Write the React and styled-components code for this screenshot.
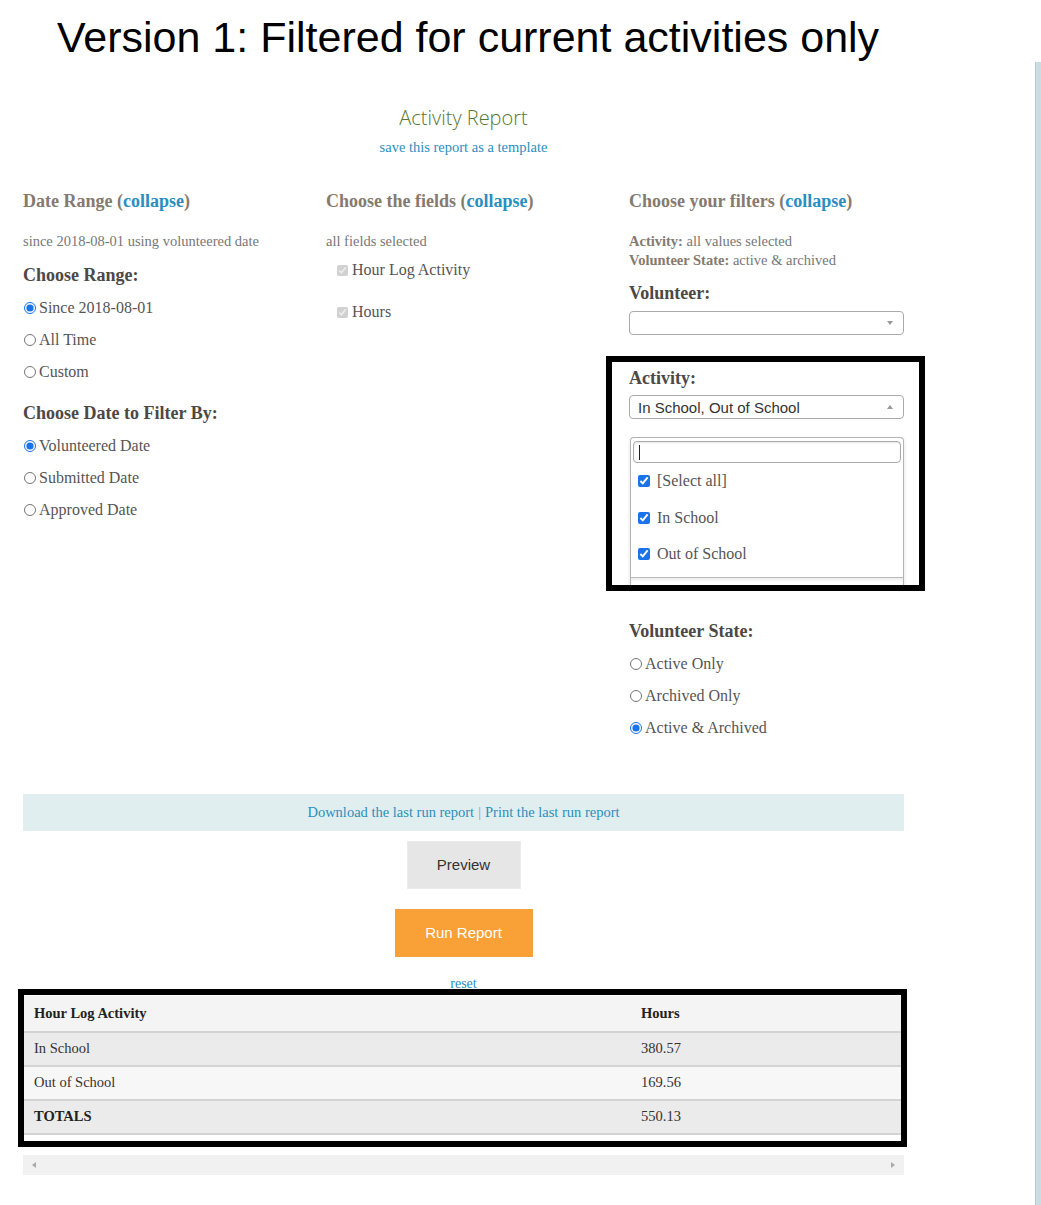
import styled, { createGlobalStyle } from "styled-components";

const GlobalStyle = createGlobalStyle`
  body {
    margin: 0;
    background: #fff;
    font-family: "Liberation Serif", "Times New Roman", serif;
    color: #555;
  }
`;

const Page = styled.div`
  min-height: 100vh;
  display: flex;
  flex-direction: column;
`;

const Title = styled.h1`
  margin: 0;
  height: 62px;
  box-sizing: border-box;
  padding: 16px 0 0 57px;
  font-family: "Liberation Sans", Arial, sans-serif;
  font-weight: 400;
  font-size: 43px;
  line-height: 42px;
  letter-spacing: 0;
  color: #000;
`;

const Body = styled.div`
  flex: 1;
  display: flex;
  align-items: stretch;
`;

const Main = styled.div`
  width: 1035px;
  box-sizing: border-box;
  padding: 44px 0 30px 23px;
`;

const SideBar = styled.div`
  width: 6px;
  background: linear-gradient(to right, #b7ced5 0 1px, #c9dde3 1px);
`;

const Content = styled.div`
  width: 881px;
`;

const ReportHead = styled.div`
  text-align: center;
`;

const ReportTitle = styled.div`
  font-family: "Open Sans", sans-serif;
  font-weight: 300;
  font-size: 20px;
  line-height: 24px;
  color: #587630;
`;

const TemplateLink = styled.a`
  display: block;
  margin-top: 9px;
  font-size: 14.5px;
  line-height: 16px;
  color: #2a8fbd;
  text-decoration: none;
`;

const Columns = styled.div`
  margin-top: 35px;
  display: grid;
  grid-template-columns: 303px 303px 275px;
`;

const Column = styled.div`
  display: flex;
  flex-direction: column;
`;

const SectionHeading = styled.div`
  font-weight: 700;
  font-size: 18px;
  line-height: 22px;
  color: #857a6e;

  a {
    color: #2a8fc0;
    text-decoration: none;
  }
`;

const Summary = styled.div`
  margin-top: 20px;
  font-size: 14.5px;
  line-height: ${(p) => (p.$tight ? "19px" : "18px")};
  color: #777;

  b {
    color: #857a6e;
  }
`;

const Label = styled.div`
  margin-top: ${(p) => p.$mt ?? 14}px;
  font-weight: 700;
  font-size: 18px;
  line-height: 22px;
  color: #4d4844;
`;

const OptionList = styled.div`
  margin-top: 6px;
  display: flex;
  flex-direction: column;
`;

const OptionRow = styled.label`
  height: 32px;
  display: flex;
  align-items: center;
  font-size: 16px;
  color: #555;
`;

const Radio = styled.input.attrs({ type: "radio" })`
  width: 12px;
  height: 12px;
  margin: 0 3px 0 1px;
  accent-color: #1a73e8;
`;

const FieldList = styled.div`
  margin-top: 4px;
  display: flex;
  flex-direction: column;
  gap: 10px;
  padding-left: 11px;
`;

const FieldCheck = styled.input.attrs({ type: "checkbox" })`
  width: 11px;
  height: 11px;
  margin: 0 4px 0 0;
`;

const SelectBox = styled.div`
  margin-top: ${(p) => p.$mt}px;
  height: 24px;
  box-sizing: border-box;
  border: 1px solid #aaa;
  border-radius: 4px;
  background: #fff;
  display: flex;
  align-items: center;
  justify-content: space-between;
  padding: 0 10px 0 8px;
  font-family: "Liberation Sans", Arial, sans-serif;
  font-size: 15px;
  color: #333;
`;

const Arrow = styled.span`
  width: 0;
  height: 0;
  border-left: 3.5px solid transparent;
  border-right: 3.5px solid transparent;
  ${(p) =>
    p.$up
      ? "border-bottom: 4px solid #999;"
      : "border-top: 4px solid #999;"}
`;

const Highlight = styled.div`
  margin: 21px -21px 0 -23px;
  padding: 5px 15px 0 17px;
  border: 6px solid #000;
`;

const DropPanel = styled.div`
  margin: 18px 0 0 1px;
  border: 1px solid #b4b4b4;
  border-bottom: none;
  border-radius: 4px 4px 0 0;
  box-shadow: 0 2px 4px rgba(0, 0, 0, 0.12);
  background: #fff;
`;

const SearchInput = styled.div`
  margin: 3px 2px 0;
  height: 22px;
  box-sizing: border-box;
  border: 1px solid #aaa;
  border-radius: 4px;
  box-shadow: inset 0 1px 2px rgba(0, 0, 0, 0.1);
  display: flex;
  align-items: center;
  padding-left: 5px;
`;

const Caret = styled.span`
  width: 1px;
  height: 15px;
  background: #222;
`;

const DropItem = styled.label`
  height: 36.5px;
  display: flex;
  align-items: center;
  padding-left: 7px;
  font-size: 16px;
  color: #555;
`;

const DropCheck = styled.input.attrs({ type: "checkbox" })`
  width: 12px;
  height: 12px;
  margin: 0 7px 0 0;
  accent-color: #1a73e8;
`;

const DropFooter = styled.div`
  margin-top: 4px;
  height: 7px;
  border-top: 1px solid #bbb;
  box-shadow: inset 0 2px 3px rgba(0, 0, 0, 0.08);
`;

const LinkBar = styled.div`
  margin-top: 50px;
  height: 37px;
  background: #e0eef0;
  display: flex;
  align-items: center;
  justify-content: center;
  font-size: 14.5px;
  color: #999;

  a {
    color: #2a8fbd;
    text-decoration: none;
  }
`;

const Sep = styled.span`
  margin: 0 4px;
`;

const Actions = styled.div`
  display: flex;
  flex-direction: column;
  align-items: center;
`;

const ActionButton = styled.button`
  margin-top: ${(p) => (p.$primary ? 20 : 10)}px;
  width: ${(p) => (p.$primary ? 138 : 114)}px;
  height: 48px;
  border: 1px solid ${(p) => (p.$primary ? "#f5a040" : "#ececec")};
  background: ${(p) => (p.$primary ? "#f9a036" : "#e6e6e6")};
  color: ${(p) => (p.$primary ? "#fff" : "#333")};
  font-family: "Liberation Sans", Arial, sans-serif;
  font-size: 15px;
  padding: 0;
`;

const ResetLink = styled.a`
  margin-top: 20px;
  font-size: 14px;
  line-height: 13px;
  height: 13px;
  color: #2a8fbd;
  text-decoration: none;
`;

const TableFrame = styled.div`
  margin: -1px 0 0 -5px;
  width: 889px;
  box-sizing: border-box;
  border: 6px solid #000;
  padding: 1px 0 6px;
  background: #fff;
`;

const TableRow = styled.div`
  display: grid;
  grid-template-columns: 607px 1fr;
  align-items: center;
  height: ${(p) => (p.$head ? 37 : 34)}px;
  box-sizing: border-box;
  border-bottom: 2px solid #d3d3d3;
  background: ${(p) => p.$bg};
  font-size: 14.5px;
  color: #333;
`;

const Cell = styled.div`
  padding-left: 10px;
  font-weight: ${(p) => (p.$bold ? 700 : "inherit")};
  color: ${(p) => (p.$bold ? "#222" : "inherit")};
`;

const ScrollTrack = styled.div`
  margin-top: 8px;
  height: 20px;
  background: #f1f1f1;
  display: flex;
  align-items: center;
  justify-content: space-between;
  padding: 0 9px;
`;

const ScrollArrow = styled.span`
  width: 0;
  height: 0;
  border-top: 3.5px solid transparent;
  border-bottom: 3.5px solid transparent;
  ${(p) =>
    p.$right
      ? "border-left: 4px solid #aaa;"
      : "border-right: 4px solid #aaa;"}
`;

const rows = [
  { name: "In School", hours: "380.57", bg: "#ebebeb" },
  { name: "Out of School", hours: "169.56", bg: "#f7f7f7" },
];

const Radios = ({ name, options, checked }) => (
  <OptionList>
    {options.map((o) => (
      <OptionRow key={o}>
        <Radio name={name} defaultChecked={o === checked} />
        {o}
      </OptionRow>
    ))}
  </OptionList>
);

export default function App() {
  return (
    <Page>
      <GlobalStyle />
      <Title>Version 1: Filtered for current activities only</Title>
      <Body>
        <Main>
          <Content>
            <ReportHead>
              <ReportTitle>Activity Report</ReportTitle>
              <TemplateLink href="#">save this report as a template</TemplateLink>
            </ReportHead>

            <Columns>
              <Column>
                <SectionHeading>
                  Date Range (<a href="#">collapse</a>)
                </SectionHeading>
                <Summary>since 2018-08-01 using volunteered date</Summary>
                <Label>Choose Range:</Label>
                <Radios
                  name="range"
                  options={["Since 2018-08-01", "All Time", "Custom"]}
                  checked="Since 2018-08-01"
                />
                <Label>Choose Date to Filter By:</Label>
                <Radios
                  name="datetype"
                  options={["Volunteered Date", "Submitted Date", "Approved Date"]}
                  checked="Volunteered Date"
                />
              </Column>

              <Column>
                <SectionHeading>
                  Choose the fields (<a href="#">collapse</a>)
                </SectionHeading>
                <Summary>all fields selected</Summary>
                <FieldList>
                  <OptionRow>
                    <FieldCheck disabled defaultChecked />
                    Hour Log Activity
                  </OptionRow>
                  <OptionRow>
                    <FieldCheck disabled defaultChecked />
                    Hours
                  </OptionRow>
                </FieldList>
              </Column>

              <Column>
                <SectionHeading>
                  Choose your filters (<a href="#">collapse</a>)
                </SectionHeading>
                <Summary $tight>
                  <b>Activity:</b> all values selected
                  <br />
                  <b>Volunteer State:</b> active &amp; archived
                </Summary>
                <Label $mt={12}>Volunteer:</Label>
                <SelectBox $mt={7}>
                  <span />
                  <Arrow />
                </SelectBox>

                <Highlight>
                  <Label $mt={0}>Activity:</Label>
                  <SelectBox $mt={6}>
                    <span>In School, Out of School</span>
                    <Arrow $up />
                  </SelectBox>
                  <DropPanel>
                    <SearchInput>
                      <Caret />
                    </SearchInput>
                    {["[Select all]", "In School", "Out of School"].map((t) => (
                      <DropItem key={t}>
                        <DropCheck defaultChecked />
                        {t}
                      </DropItem>
                    ))}
                    <DropFooter />
                  </DropPanel>
                </Highlight>

                <Label $mt={29}>Volunteer State:</Label>
                <Radios
                  name="state"
                  options={["Active Only", "Archived Only", "Active & Archived"]}
                  checked="Active & Archived"
                />
              </Column>
            </Columns>

            <LinkBar>
              <a href="#">Download the last run report</a>
              <Sep>|</Sep>
              <a href="#">Print the last run report</a>
            </LinkBar>

            <Actions>
              <ActionButton>Preview</ActionButton>
              <ActionButton $primary>Run Report</ActionButton>
              <ResetLink href="#">reset</ResetLink>
            </Actions>

            <TableFrame>
              <TableRow $head $bg="#f4f4f4">
                <Cell $bold>Hour Log Activity</Cell>
                <Cell $bold>Hours</Cell>
              </TableRow>
              {rows.map((r) => (
                <TableRow key={r.name} $bg={r.bg}>
                  <Cell>{r.name}</Cell>
                  <Cell>{r.hours}</Cell>
                </TableRow>
              ))}
              <TableRow $bg="#ebebeb">
                <Cell $bold>TOTALS</Cell>
                <Cell>550.13</Cell>
              </TableRow>
            </TableFrame>

            <ScrollTrack>
              <ScrollArrow />
              <ScrollArrow $right />
            </ScrollTrack>
          </Content>
        </Main>
        <SideBar />
      </Body>
    </Page>
  );
}
